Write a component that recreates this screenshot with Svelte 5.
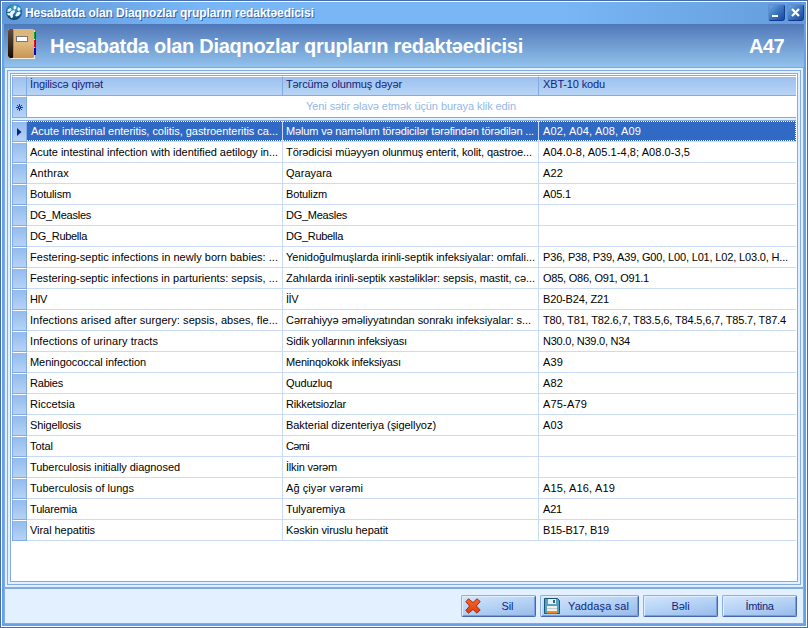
<script>
  const rows = [
    [['Acute intestinal enteritis, colitis, gastroenteritis ca...', 247], ['Məlum və naməlum törədicilər tərəfindən törədilən ...', 248], ['A02, A04, A08, A09', 98]],
    [['Acute intestinal infection with identified aetilogy in...', 248], ['Törədicisi müəyyən olunmuş enterit, kolit, qastroe...', 246], ['A04.0-8, A05.1-4,8; A08.0-3,5', 147]],
    [['Anthrax', 39], ['Qarayara', 46], ['A22', 20]],
    [['Botulism', 41], ['Botulizm', 41], ['A05.1', 28]],
    [['DG_Measles', 61], ['DG_Measles', 61], ['', 0]],
    [['DG_Rubella', 57], ['DG_Rubella', 57], ['', 0]],
    [['Festering-septic infections in newly born babies: ...', 248], ['Yenidoğulmuşlarda irinli-septik infeksiyalar: omfali...', 249], ['P36, P38, P39, A39, G00, L00, L01, L02, L03.0, H...', 245]],
    [['Festering-septic infections in parturients: sepsis, ...', 248], ['Zahılarda irinli-septik xəstəliklər: sepsis, mastit, cə...', 249], ['O85, O86, O91, O91.1', 106]],
    [['HIV', 17], ['İİV', 12], ['B20-B24, Z21', 66]],
    [['Infections arised after surgery: sepsis, abses, fle...', 248], ['Cərrahiyyə əməliyyatından sonrakı infeksiyalar: s...', 245], ['T80, T81, T82.6,7, T83.5,6, T84.5,6,7, T85.7, T87.4', 243]],
    [['Infections of urinary tracts', 128], ['Sidik yollarının infeksiyası', 121], ['N30.0, N39.0, N34', 87]],
    [['Meningococcal infection', 116], ['Meninqokokk infeksiyası', 115], ['A39', 20]],
    [['Rabies', 33], ['Quduzluq', 46], ['A82', 20]],
    [['Riccetsia', 45], ['Rikketsiozlar', 60], ['A75-A79', 44]],
    [['Shigellosis', 51], ['Bakterial dizenteriya (şigellyoz)', 150], ['A03', 20]],
    [['Total', 23], ['Cəmi', 23], ['', 0]],
    [['Tuberculosis initially diagnosed', 150], ['İlkin vərəm', 51], ['', 0]],
    [['Tuberculosis of lungs', 104], ['Ağ çiyər vərəmi', 77], ['A15, A16, A19', 72]],
    [['Tularemia', 47], ['Tulyaremiya', 59], ['A21', 19]],
    [['Viral hepatitis', 65], ['Kəskin viruslu hepatit', 102], ['B15-B17, B19', 66]],
  ];

  // Spreads the tracking so that a label takes the given width.
  function fit(node, width) {
    if (!width) return;
    const natural = node.getBoundingClientRect().width;
    node.style.letterSpacing = (width - natural) / node.textContent.length + 'px';
  }
</script>

<div class="window">
  <div class="frame">
    <div class="titlebar">
      <svg class="app" width="16" height="16" viewBox="0 0 16 16">
        <defs><radialGradient id="orb" cx=".5" cy=".2" r=".85"><stop offset="0" stop-color="#4ba3cf"/><stop offset=".6" stop-color="#1a6a9d"/><stop offset="1" stop-color="#0c3060"/></radialGradient></defs>
        <circle cx="8" cy="8" r="8" fill="url(#orb)"/>
        <path d="M8.500 1.500l2 .8-.4 2.400-1.800 1-1-1.600zM12 3l2.200 1 .3 2-2 1.200-1.300-1.600zM1.800 5.200l2.700-1.200 1.200 1.400-1.700 2.200-2.600.4zM1.200 9l2.600.2 1.500-2.300L8.200 6l1 1.800-2.400 3 .2 2.400-2 1-1-2.600-2.200-.4zM11 8.200l3-.8.7 1.800-2 2.600-2.300.8-1.200-1.200z" fill="#e6f5ff"/>
      </svg>
      <b class="caption"><span use:fit={289}>Hesabatda olan Diaqnozlar qrupların redaktəedicisi</span></b>
      <button class="ctl" aria-label="Minimize"><svg width="17" height="17"><path d="M4 12h6" stroke="#fff" stroke-width="2"/></svg></button>
      <button class="ctl" aria-label="Close"><svg width="17" height="17"><path d="M5 5l7 7M12 5l-7 7" stroke="#fff" stroke-width="2.200"/></svg></button>
    </div>

    <div class="banner">
      <svg class="book" width="29" height="32" viewBox="0 0 29 32">
        <defs>
          <linearGradient id="cover" x2="0" y2="1"><stop offset="0" stop-color="#dcb57c"/><stop offset=".5" stop-color="#dfb97f"/><stop offset="1" stop-color="#c69552"/></linearGradient>
          <linearGradient id="spine" x2="0" y2="1"><stop offset="0" stop-color="#61503f"/><stop offset="1" stop-color="#1a0900"/></linearGradient>
        </defs>
        <path d="M2 29h25v2H3z" fill="#f5eee0"/>
        <path d="M25 2h2v28h-2z" fill="#e9e2d4"/>
        <rect x="25" y="4" width="3" height="7" fill="#00a927"/>
        <rect x="25" y="12" width="3" height="7" fill="#e9093c"/>
        <rect x="25" y="20" width="3" height="7" fill="#0909b0"/>
        <rect x="27" y="4" width="1" height="23" fill="#222" opacity=".45"/>
        <rect y="1" width="26" height="29" rx="1.5" fill="url(#cover)"/>
        <path d="M1.5 1H5v29H2L0 28V2.5z" fill="url(#spine)"/>
        <path d="M5.5 2v27" stroke="#b58a50"/>
        <rect x="8.500" y="8.500" width="11" height="5" fill="#fff" stroke="#77767a"/>
      </svg>
      <b class="heading"><span use:fit={473}>Hesabatda olan Diaqnozlar qrupların redaktəedicisi</span></b>
      <b class="code"><span use:fit={35}>A47</span></b>
    </div>

    <div class="body">
      <div class="outer"><div class="inner">
        <div class="grid">
          <div class="row head">
            <i></i>
            <div><span use:fit={73}>İngiliscə qiymət</span></div>
            <div><span use:fit={116}>Tərcümə olunmuş dəyər</span></div>
            <div><span use:fit={62}>XBT-10 kodu</span></div>
          </div>
          <div class="row fresh">
            <i><svg width="7" height="7"><path d="M0 3.500h3M4 3.500h3M3.500 0v3M3.500 4v3M1 1l2 2M6 1L4 3M1 6l2-2M6 6L4 4" stroke="#1b3d94"/></svg></i>
            <div><span use:fit={210}>Yeni sətir əlavə etmək üçün buraya klik edin</span></div>
          </div>
          <div class="divider"></div>
          {#each rows as row, r}
            <div class="row" class:selected={r === 0}>
              <i>{#if r === 0}<svg width="5" height="8"><path d="M0 0l4.500 4L0 8z" fill="#0b247c"/></svg>{/if}</i>
              {#each row as [text, width]}
                <div><span use:fit={width}>{text}</span></div>
              {/each}
            </div>
          {/each}
        </div>
      </div></div>
    </div>

    <div class="footer">
      <button class="btn">
        <svg class="ic" width="16" height="16" viewBox="0 0 16 16"><defs><linearGradient id="red" x2="0" y2="1"><stop offset="0" stop-color="#f9682c"/><stop offset="1" stop-color="#e13c05"/></linearGradient></defs><path d="M3.500.8L8 4.600 12 .8l3.200 2.700L11.300 8l3.900 4-3.200 3.200-4-3.700-4.500 3.700L.8 12.500 4.600 8 .8 3.800z" fill="url(#red)" stroke="#a42a10"/></svg>
        <span class="lbl"><span use:fit={12}>Sil</span></span>
      </button>
      <button class="btn wide">
        <svg class="ic" width="16" height="16" viewBox="0 0 16 16"><path d="M.5.500h13l2 2v13H.5z" fill="#56a2bd" stroke="#1b5575"/><path d="M4 1h8v5H4z" fill="#e7f0f3"/><path d="M9 2h2v3H9z" fill="#286681"/><path d="M3 8h10v5H3z" fill="#eee"/><path d="M3 10.500h10" stroke="#c5c9cc"/><path d="M3 13h10v2.500H3z" fill="#f58b12"/></svg>
        <span class="lbl"><span use:fit={61}>Yaddaşa sal</span></span>
      </button>
      <button class="btn"><span use:fit={18}>Bəli</span></button>
      <button class="btn"><span use:fit={28}>İmtina</span></button>
    </div>
  </div>
</div>

<style>
  :global(body) { margin: 0; overflow: hidden; }
  .window, .window * { box-sizing: border-box; }
  .window {
    width: 808px; height: 628px; border: 1px solid #456cb3; background: #fff; padding: 1px;
    font: 11px/13px "Liberation Sans", Arial, sans-serif; color: #000; cursor: default;
  }
  span { white-space: pre; }
  .frame { height: 624px; background: #69a2e2; display: flex; flex-direction: column; padding: 0 2px 2px; }
  .titlebar {
    height: 22px; margin: 0 -2px; padding: 2px 2px 0 4px; display: flex; align-items: flex-start; flex: none;
    background: linear-gradient(90deg, #5f98d7, #78b6f5 25%, #78b6f5 70%, #649cdb);
  }
  .app { margin-right: 3px; flex: none; }
  .caption { flex: 1; font-size: 12px; line-height: 16px; padding-top: 1px; color: #fff; text-shadow: 1px 1px 0 #315fae; }
  .ctl {
    width: 17px; height: 17px; padding: 0; margin-left: 2px; border: 1px solid #2457a5; border-radius: 3px; flex: none;
    border-color: #5d8fd0 #153e91 #10348c #5d8fd0;
    background: linear-gradient(135deg, #6ea7e0, #3c76bf 50%, #1b479b);
  }
  .ctl svg { display: block; margin: -1px; }
  .banner {
    height: 43px; flex: none; display: flex; align-items: center; padding: 0 20px 0 4px; color: #fff;
    background: linear-gradient(#5078b9, #92c2ec);
  }
  .book { align-self: flex-start; margin-top: 4px; flex: none; }
  .heading { flex: 1; font-size: 20px; line-height: 24px; padding-left: 13px; }
  .code { font-size: 20px; line-height: 24px; }
  .body { height: 520px; flex: none; background: #e2f0ff; border: 1px solid #79aae6; border-width: 1px 1px 0; padding: 2px; }
  .outer { height: 515px; border: 1px solid #81abe2; padding: 2px; }
  .inner { height: 509px; border: 1px solid #81abe2; background: #fff; padding: 1px 1px 0; }
  .grid { border-top: 1px solid #81abe2; }
  .row { display: flex; height: 21px; }
  .row i {
    width: 15px; flex: none; border: 1px solid #81abe2; border-top: 1px solid #fff;
    background: linear-gradient(#92bbee, #b6d3f5); display: flex; align-items: center; justify-content: center;
  }
  .row > div { width: 256px; flex: none; border-right: 1px solid #c9dbf6; border-bottom: 1px solid #c9dbf6; padding: 4px 0 0 3px; overflow: hidden; white-space: nowrap; }
  .row > div:last-child { flex: 1; border-right: 0; padding-left: 4px; }
  .head { height: 20px; }
  .row.head > div, .head i { background: linear-gradient(#9cc0ee, #b8d5f5); border-color: #81abe2; border-top: 1px solid #fff; color: #10257c; }
  .row.head > div { padding-top: 1px; }
  .fresh { height: 22px; }
  .row.fresh > div { color: #93b8e6; text-align: center; padding: 4px 1px 0 0; border-color: #81abe2; }
  .divider { height: 3px; background: #e2f0ff; border-bottom: 1px solid #81abe2; }
  .selected > div { background: linear-gradient(90deg, #fff 50%, #316ac5 0) 0 0 / 2px 1px repeat-x, linear-gradient(90deg, #fff 50%, #316ac5 0) 0 100% / 2px 1px repeat-x, #316ac5; background-clip: padding-box; color: #fff; }
  .selected > div:nth-child(2) { padding-left: 4px; }
  .selected > div:last-child { position: relative; }
  .selected > div:last-child::after { content: ""; position: absolute; right: 0; top: 0; bottom: 0; width: 1px; background: repeating-linear-gradient(#fff 0 1px, #316ac5 1px 2px); }
  .footer {
    height: 37px; flex: none; border: 1px solid #81abe2; border-top-width: 2px; background: #e2f0ff;
    display: flex; justify-content: flex-end; gap: 4px; padding: 6px 6px 0 0;
  }
  .btn {
    width: 75px; height: 22px; border: 1px solid #4970b6; border-color: #8cafe2 #4668b1 #4668b1 #8cafe2; border-radius: 2px; padding: 0;
    background: linear-gradient(170deg, #d3e6fc, #b4d2f5 50%, #98baea); box-shadow: inset 1px 1px #e1efff, inset -1px -1px #7a9edb;
    color: #10257c; font: 11px/13px "Liberation Sans", Arial, sans-serif; display: flex; align-items: center; justify-content: center;
  }
  .wide { width: 99px; }
  .ic { margin-left: 3px; flex: none; }
  .lbl { flex: 1; text-align: center; padding-right: 1px; }
</style>
